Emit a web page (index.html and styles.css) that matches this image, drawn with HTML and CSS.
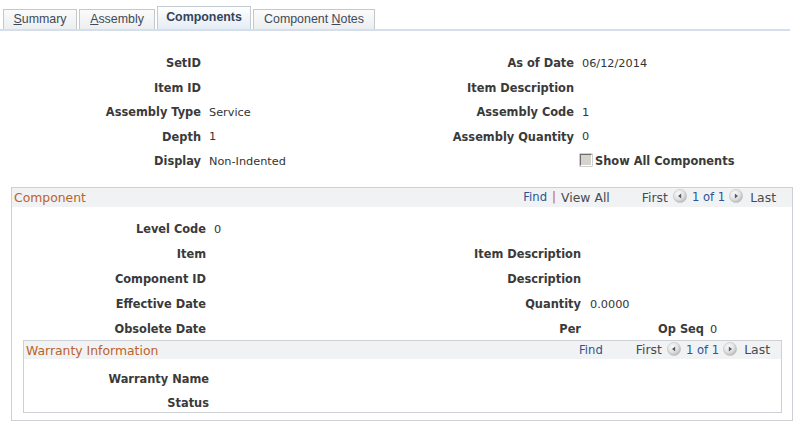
FILE: index.html
```html
<!DOCTYPE html>
<html>
<head>
<meta charset="utf-8">
<link rel="stylesheet" href="styles.css">
</head>
<body>
<div class="tabs">
  <div class="tab t-summary"><u>S</u>ummary</div>
  <div class="tab t-assembly"><u>A</u>ssembly</div>
  <div class="tab active t-components">Components</div>
  <div class="tab t-notes">Component <u>N</u>otes</div>
</div>

<div class="header-grid">
  <div class="lbl">SetID</div><div class="val"></div>
  <div class="lbl">As of Date</div><div class="val">06/12/2014</div>
  <div class="lbl">Item ID</div><div class="val"></div>
  <div class="lbl">Item Description</div><div class="val"></div>
  <div class="lbl">Assembly Type</div><div class="val">Service</div>
  <div class="lbl">Assembly Code</div><div class="val">1</div>
  <div class="lbl">Depth</div><div class="val">1</div>
  <div class="lbl">Assembly Quantity</div><div class="val">0</div>
  <div class="lbl">Display</div><div class="val">Non-Indented</div>
  <div class="lbl"></div><div class="val chk-cell"><span class="checkbox"></span><span class="chk-label">Show All Components</span></div>
</div>

<div class="box">
  <div class="box-head">
    <span class="box-title">Component</span>
    <div class="nav">
      <span class="link find">Find</span><span class="sep">|</span><span class="viewall">View All</span>
      <span class="first">First</span>
      <svg class="arrow" width="14" height="14" viewBox="0 0 14 14"><defs><radialGradient id="g1" cx="40%" cy="35%" r="65%"><stop offset="0" stop-color="#fbfbfb"/><stop offset="0.6" stop-color="#e2e2e2"/><stop offset="1" stop-color="#b9b9b9"/></radialGradient></defs><circle cx="7" cy="7" r="6.6" fill="url(#g1)" stroke="#c4c4c4" stroke-width="0.6"/><path d="M5 7 L8.2 4.4 L8.2 9.6 Z" fill="#5a5a5a"/></svg>
      <span class="link count">1 of 1</span>
      <svg class="arrow" width="14" height="14" viewBox="0 0 14 14"><circle cx="7" cy="7" r="6.6" fill="url(#g1)" stroke="#c4c4c4" stroke-width="0.6"/><path d="M9 7 L5.8 4.4 L5.8 9.6 Z" fill="#5a5a5a"/></svg>
      <span class="last">Last</span>
    </div>
  </div>
  <div class="comp-grid">
    <div class="lbl">Level Code</div><div class="val span5">0</div>
    <div class="lbl">Item</div><div class="val"></div>
    <div class="lbl">Item Description</div><div class="val span3"></div>
    <div class="lbl">Component ID</div><div class="val"></div>
    <div class="lbl">Description</div><div class="val span3"></div>
    <div class="lbl">Effective Date</div><div class="val"></div>
    <div class="lbl">Quantity</div><div class="val qty span3">0.0000</div>
    <div class="lbl">Obsolete Date</div><div class="val"></div>
    <div class="lbl">Per</div><div class="val"></div>
    <div class="lbl">Op Seq</div><div class="val opseq">0</div>
  </div>

  <div class="wbox">
    <div class="box-head wbox-head">
      <span class="box-title">Warranty Information</span>
      <div class="nav">
        <span class="link find wfind">Find</span>
        <span class="first">First</span>
        <svg class="arrow" width="14" height="14" viewBox="0 0 14 14"><circle cx="7" cy="7" r="6.6" fill="url(#g1)" stroke="#c4c4c4" stroke-width="0.6"/><path d="M5 7 L8.2 4.4 L8.2 9.6 Z" fill="#5a5a5a"/></svg>
        <span class="link count">1 of 1</span>
        <svg class="arrow" width="14" height="14" viewBox="0 0 14 14"><circle cx="7" cy="7" r="6.6" fill="url(#g1)" stroke="#c4c4c4" stroke-width="0.6"/><path d="M9 7 L5.8 4.4 L5.8 9.6 Z" fill="#5a5a5a"/></svg>
        <span class="last">Last</span>
      </div>
    </div>
    <div class="warr-grid">
      <div class="lbl">Warranty Name</div><div class="val"></div>
      <div class="lbl">Status</div><div class="val"></div>
    </div>
  </div>
</div>
</body>
</html>
```

FILE: styles.css
```css
* { box-sizing: border-box; }
body {
  margin: 0;
  background: #ffffff;
  font-family: "DejaVu Sans", Verdana, sans-serif;
  color: #333333;
  width: 805px;
  height: 429px;
  overflow: hidden;
}

/* Tabs */
.tabs {
  display: flex;
  align-items: flex-end;
  height: 31px;
  width: 790px;
  padding-left: 3px;
  border-bottom: 2px solid #d5dfeb;
}
.tab {
  height: 20px;
  line-height: 19px;
  font-family: "Liberation Sans", Arial, sans-serif;
  font-size: 12.4px;
  color: #3e4a58;
  text-align: center;
  border: 1px solid #c4c8ce;
  border-bottom: none;
  background: linear-gradient(#fbfbfb, #eceef0);
  margin-right: 2px;
}
.tab u { text-decoration: underline; }
.t-summary { width: 74px; }
.t-assembly { width: 76px; margin-right: 2px; }
.t-components { width: 94px; }
.t-notes { width: 122px; }
.tab.active {
  height: 23px;
  line-height: 21px;
  font-weight: bold;
  color: #33445a;
  background: linear-gradient(#ffffff, #e4ecf5);
  border-color: #c2cad4;
}

/* Labels / values */
.lbl {
  font-weight: bold;
  font-size: 11.4px;
  text-align: right;
  color: #3a3a3a;
  white-space: nowrap;
}
.val {
  font-size: 11.3px;
  color: #333333;
  white-space: nowrap;
}

.header-grid {
  display: grid;
  grid-template-columns: 201px 208px 165px 1fr;
  grid-auto-rows: 24.5px;
  align-items: center;
  padding-top: 18px;
}
.header-grid .lbl, .header-grid .val, .comp-grid .lbl, .comp-grid .val {
  padding-top: 4px;
}
.header-grid .val { padding-left: 8px; }
.chk-cell {
  display: flex;
  align-items: center;
}
.header-grid .chk-cell { padding-left: 6px; }
.checkbox {
  display: inline-block;
  width: 12px;
  height: 12px;
  margin-top: -3px;
  background: #d6d3cc;
  border-top: 1px solid #6e6e6e;
  border-left: 1px solid #6e6e6e;
  border-right: 1px solid #ffffff;
  border-bottom: 1px solid #ffffff;
  box-shadow: 0 0 0 0.5px #a0a0a0;
}
.chk-label {
  font-weight: bold;
  font-size: 11.4px;
  color: #3a3a3a;
  margin-left: 3px;
}

/* Component box */
.box {
  margin: 15px 12px 0 11px;
  border: 1px solid #cdd1d6;
  padding-bottom: 7px;
}
.box-head {
  display: flex;
  align-items: center;
  justify-content: space-between;
  height: 19px;
  background: #f0f2f4;
  padding: 0 16px 0 2px;
}
.box-title {
  font-size: 12.4px;
  color: #bb622a;
}
.nav {
  display: flex;
  align-items: center;
}
.link {
  color: #2d5592;
  font-size: 11.6px;
}
.sep {
  color: #c5612a;
  font-size: 12px;
  margin: 0 5px 0 5px;
}
.viewall, .first, .last {
  font-size: 12.4px;
  color: #4a4a4a;
}
.viewall { margin-right: 32px; }
.first { margin-right: 5px; }
.arrow { display: block; margin-top: -2px; }
.count { margin: 0 4px 0 5px; }
.last { margin-left: 7px; }

.comp-grid {
  display: grid;
  grid-template-columns: 194px 224px 151px 59px 64px 1fr;
  grid-auto-rows: 25px;
  align-items: center;
  padding-top: 8px;
}
.comp-grid .val { padding-left: 8px; }
.comp-grid .qty { padding-left: 9px; }
.comp-grid .opseq { padding-left: 6px; }
.span5 { grid-column: span 5; }
.span3 { grid-column: span 3; }

/* Warranty box */
.wbox {
  margin: 0 10px 0 11px;
  border: 1px solid #cdd1d6;
  height: 73px;
}
.wbox-head {
  height: 18px;
  padding-right: 11px;
}
.wbox-head .box-title { padding-top: 1px; }
.wfind { margin-right: 33px; }
.warr-grid {
  display: grid;
  grid-template-columns: 185px 1fr;
  grid-auto-rows: 24px;
  align-items: center;
  padding-top: 7px;
}
.warr-grid .lbl, .warr-grid .val { padding-top: 2px; }
.warr-grid .val { padding-left: 8px; }
```
